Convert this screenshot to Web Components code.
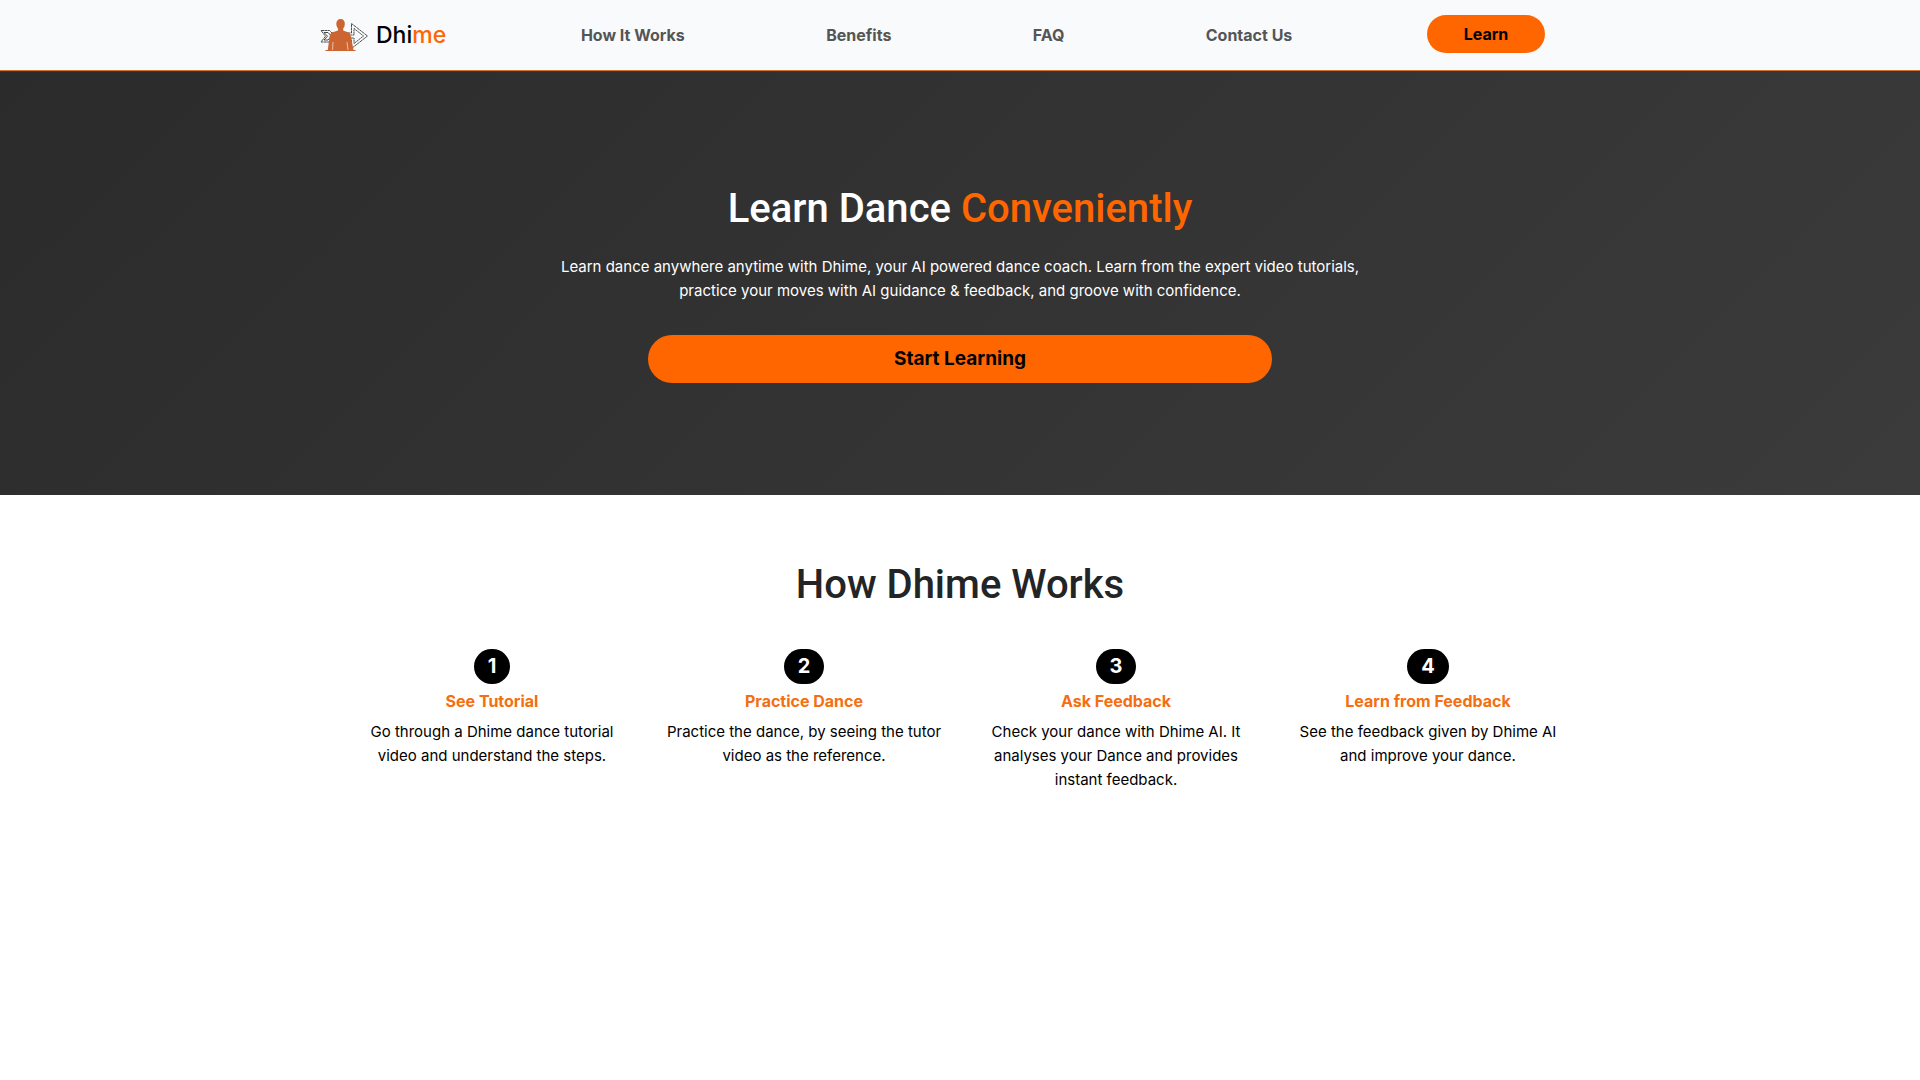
<!DOCTYPE html>
<html lang="en">
<head>
<meta charset="utf-8">
<title>Dhime</title>
<style>
  body { margin: 0; background: #fff; color: #000; font-family: Inter, "Liberation Sans", sans-serif; font-size: 15px; line-height: 24px; }
</style>
</head>
<body>
<dhime-nav></dhime-nav>
<main>
  <dhime-hero>
    <span slot="lead">Learn Dance</span>
    <span slot="accent">Conveniently</span>
    <span slot="text">Learn dance anywhere anytime with Dhime, your AI powered dance coach. Learn from the expert video tutorials, practice your moves with AI guidance &amp; feedback, and groove with confidence.</span>
    <span slot="action">Start Learning</span>
  </dhime-hero>
  <dhime-steps>
    <span slot="title">How Dhime Works</span>
    <dhime-step number="1"><span slot="title">See Tutorial</span>Go through a Dhime dance tutorial video and understand the steps.</dhime-step>
    <dhime-step number="2"><span slot="title">Practice Dance</span>Practice the dance, by seeing the tutor video as the reference.</dhime-step>
    <dhime-step number="3"><span slot="title">Ask Feedback</span>Check your dance with Dhime AI. It analyses your Dance and provides instant feedback.</dhime-step>
    <dhime-step number="4"><span slot="title">Learn from Feedback</span>See the feedback given by Dhime AI and improve your dance.</dhime-step>
  </dhime-steps>
</main>
<script>
function define(name, html) {
  customElements.define(name, class extends HTMLElement {
    constructor() {
      super();
      this.attachShadow({ mode: 'open' }).innerHTML = html;
    }
    connectedCallback() {
      const n = this.shadowRoot.querySelector('[data-number]');
      if (n) n.textContent = this.getAttribute('number');
    }
  });
}

define('dhime-logo', `
<style>
  :host { display: block; }
  a { display: flex; align-items: center; gap: 8px; color: #000; text-decoration: none; font-size: 23px; line-height: 36px; font-weight: 500; }
  svg { display: block; }
  b { font-weight: 500; color: #ff6600; }
</style>
<a href="#"><svg width="48" height="34" viewBox="0 0 48 34" aria-hidden="true">
  <g fill="none" stroke="#222" stroke-width=".8">
    <path d="M1 12.500H9.500L12 15H31.500V5.500L47.500 18 31.500 30.500V22H12L9.500 24H1L5.500 18.200Z" stroke-dasharray="3 .4"/>
    <path d="M4 14.500H8L11.500 18.200 8 22H4L7.500 18.200Z"/>
    <path d="M28 17H34V10.500L43.500 18 34 25.500V20H28" stroke-dasharray="2 .4"/>
  </g>
  <path fill="#cd6532" d="M20.500 1C23.500 1 25 3 24.800 6 24.700 8.500 23.800 9.800 23.200 10.500V12.500L28.500 14.500C30 15.200 30.500 17 31 19L33.500 32H35.500V33H5.500V32H7.800L9.500 19C9.800 17 10.500 15.200 12 14.500L18 12.500V10.500C17.300 9.500 16.400 8.300 16.300 6 16.200 3 18 1 20.500 1Z"/>
  <path stroke="#f8fafc" stroke-width=".6" d="M13 24L12.500 32M27 24L28 32"/>
</svg><span>Dhi<b>me</b></span></a>`);

define('dhime-nav', `
<style>
  :host { display: block; position: relative; background: #f8fafc; border-bottom: 1px solid #cf7434; box-shadow: 0 1px 0 #5c2c0c; }
  nav { box-sizing: border-box; max-width: 1320px; height: 70px; margin: 0 auto; padding: 0 75px 0 20px; display: flex; align-items: center; }
  ul { flex: 1; list-style: none; margin: 0 64px; padding: 0; display: flex; justify-content: space-around; }
  ul a { color: #555; font-size: 16px; font-weight: 700; text-decoration: none; }
  button { font: inherit; font-size: 16px; font-weight: 700; color: #000; background: #ff6600; border: 0; border-radius: 19px; width: 118px; height: 38px; padding: 0; margin-bottom: 2px; }
</style>
<nav>
  <dhime-logo></dhime-logo>
  <ul><li><a href="#how">How It Works</a></li><li><a href="#benefits">Benefits</a></li><li><a href="#faq">FAQ</a></li><li><a href="#contact">Contact Us</a></li></ul>
  <button type="button">Learn</button>
</nav>`);

define('dhime-hero', `
<style>
  :host { display: block; padding: 112px 24px; color: #fff; text-align: center; background: linear-gradient(135deg, #2b2b2b, #3b3b3b); }
  .box { max-width: 832px; margin: 0 auto; }
  h1 { margin: 0 0 20px; font-family: Roboto, Inter, sans-serif; font-size: 40px; line-height: 52px; font-weight: 500; }
  h1 slot[name=accent] { color: #ff6600; }
  p { margin: 0 0 32px; }
  button { font: inherit; font-size: 19px; font-weight: 700; color: #000; background: #ff6600; border: 0; border-radius: 24px; width: 75%; height: 48px; padding: 0; }
</style>
<div class="box">
  <h1><slot name="lead"></slot> <slot name="accent"></slot></h1>
  <p><slot name="text"></slot></p>
  <button type="button"><slot name="action"></slot></button>
</div>`);

define('dhime-steps', `
<style>
  :host { display: block; padding: 64px 24px; }
  h2 { margin: 0 0 38px; font-family: Roboto, Inter, sans-serif; font-size: 40px; line-height: 52px; font-weight: 500; text-align: center; color: #222426; }
  .grid { max-width: 1248px; margin: 0 auto; display: grid; grid-template-columns: repeat(4, 1fr); }
</style>
<h2><slot name="title"></slot></h2>
<div class="grid"><slot></slot></div>`);

define('dhime-step', `
<style>
  :host { display: flex; flex-direction: column; align-items: center; padding: 0 16px; text-align: center; }
  .badge { font-size: 20px; line-height: 21px; font-weight: 700; padding: 7px 14px; border-radius: 18px; background: #000; color: #fff; }
  h3 { margin: 5px 0 7px; font-size: 16px; line-height: 24px; font-weight: 700; color: #f56e0f; }
  p { margin: 0; }
</style>
<span class="badge" data-number></span>
<h3><slot name="title"></slot></h3>
<p><slot></slot></p>`);
</script>
</body>
</html>
